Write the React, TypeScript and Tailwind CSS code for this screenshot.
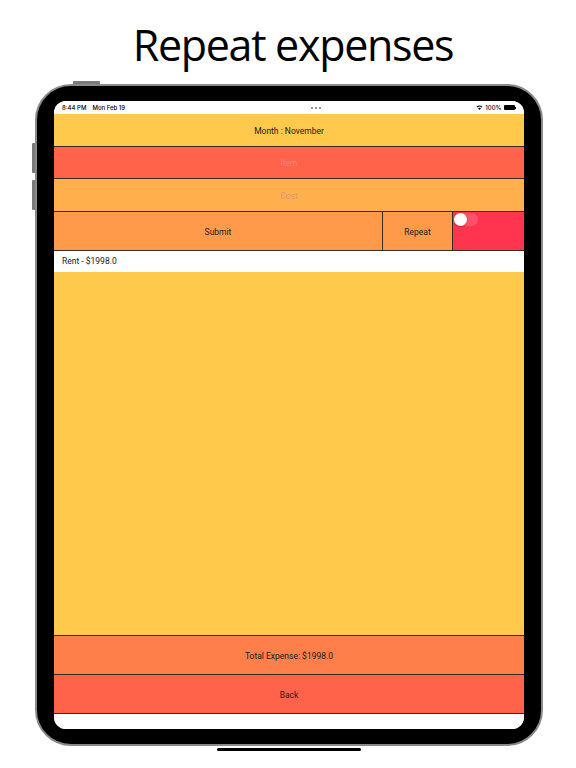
import React from 'react';

const line = 'border-b border-[#3b2a1f]';

function StatusBar() {
    return (
        <div className="h-[13px] bg-white flex items-center justify-between px-[8px] text-[6px] leading-none text-black font-['Inter',sans-serif]">
            <div className="flex gap-[6px] font-medium">
                <span>8:44 PM</span>
                <span>Mon Feb 19</span>
            </div>
            <div className="flex gap-[2px] ml-[30px]">
                <span className="w-[2px] h-[2px] rounded-full bg-gray-500" />
                <span className="w-[2px] h-[2px] rounded-full bg-gray-500" />
                <span className="w-[2px] h-[2px] rounded-full bg-gray-500" />
            </div>
            <div className="flex items-center gap-[2px] font-medium">
                <svg width="7" height="5" viewBox="0 0 14 10">
                    <path d="M7 10 L10 6.5 A5 5 0 0 0 4 6.5 Z" fill="black" />
                    <path d="M1 3.5 A9 9 0 0 1 13 3.5 L11.5 5 A7 7 0 0 0 2.5 5 Z" fill="black" />
                </svg>
                <span>100%</span>
                <span className="flex items-center">
                    <span className="w-[11px] h-[5px] rounded-[1px] bg-black" />
                    <span className="w-[1px] h-[2px] bg-black ml-[0.5px]" />
                </span>
            </div>
        </div>
    );
}

export default function App() {
    return (
        <div className="w-[576px] h-[768px] bg-white overflow-hidden font-['Roboto',Arial,sans-serif]">
            <div className="h-[84px] flex items-start justify-center pt-[17px] pl-[10px]">
                <h1 className="text-[43px] leading-[56px] text-black font-['Open_Sans',sans-serif] tracking-[-1.3px]">Repeat expenses</h1>
            </div>

            <div className="relative ml-[35px] w-[508px] h-[662px]">
                {/* hardware buttons */}
                <div className="absolute left-[38px] top-[-3px] w-[27px] h-[3px] bg-[#7a7a7a] rounded-t-[1px]" />
                <div className="absolute left-[-3px] top-[59px] w-[3px] h-[30px] bg-[#7a7a7a] rounded-l-[1px]" />
                <div className="absolute left-[-3px] top-[96px] w-[3px] h-[30px] bg-[#7a7a7a] rounded-l-[1px]" />

                <div className="w-full h-full rounded-[36px] border-[2px] border-[#8a8a8a] bg-black pt-[15px] px-[17px] pb-[15px]">
                    <div className="w-[470px] h-[628px] rounded-[12px] overflow-hidden bg-white flex flex-col text-[8.5px] text-[#1a1a1a]">
                        <StatusBar />
                        <div className={`h-[33px] pt-[2px] bg-[#FFC94B] flex items-center justify-center ${line}`}>Month : November</div>
                        <div className={`h-[32px] pt-[2px] bg-[#FF644B] flex items-center justify-center text-[#e8897a] ${line}`}>Item</div>
                        <div className={`h-[33px] pt-[2px] bg-[#FFAF4B] flex items-center justify-center text-[#d99a78] ${line}`}>Cost</div>
                        <div className={`h-[39px] flex ${line}`}>
                            <div className="w-[329px] pt-[2px] bg-[#FF9A4B] flex items-center justify-center border-r border-[#3b2a1f]">Submit</div>
                            <div className="w-[70px] pt-[2px] bg-[#FF9A4B] flex items-center justify-center border-r border-[#3b2a1f]">Repeat</div>
                            <div className="flex-1 bg-[#FF344F] relative">
                                <div className="absolute left-[1px] top-[1px] w-[24px] h-[13px] rounded-full bg-white/15" />
                                <div className="absolute left-[1px] top-[1px] w-[13px] h-[13px] rounded-full bg-white shadow-[0_1px_2px_rgba(0,0,0,0.25)]" />
                            </div>
                        </div>
                        <div className="h-[21px] bg-white flex items-center px-[8px]">Rent - $1998.0</div>
                        <div className={`flex-1 bg-[#FFC94B] ${line}`} />
                        <div className={`h-[39px] pt-[3px] bg-[#FF7F4A] flex items-center justify-center ${line}`}>Total Expense: $1998.0</div>
                        <div className={`h-[39px] pt-[3px] bg-[#FF644B] flex items-center justify-center ${line}`}>Back</div>
                        <div className="h-[15px] bg-white" />
                    </div>
                </div>
            </div>

            <div className="mt-[2px] ml-[217px] w-[144px] h-[3px] rounded-full bg-black" />
        </div>
    );
}
